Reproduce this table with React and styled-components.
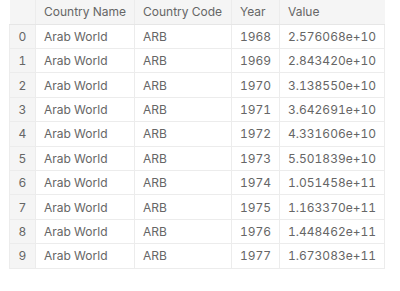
import React from "react";
import styled, { createGlobalStyle } from "styled-components";

const Global = createGlobalStyle`
  html, body { margin: 0; padding: 0; background: #ffffff; }
  body { font-family: Inter, "Noto Sans", "Liberation Sans", sans-serif; }
`;

const Wrap = styled.div`
  padding: 0 0 0 9px;
`;

const Table = styled.table`
  border-collapse: collapse;
  table-layout: fixed;
  width: 375px;
  font-size: 12px;
  color: #666666;
  font-variant-numeric: tabular-nums;
`;

const Th = styled.th`
  height: 23.7px;
  padding: 0 8px;
  text-align: left;
  font-weight: 400;
  background: #f5f5f5;
  border-left: 1px solid ${(p) => (p.$first ? "transparent" : "#ececec")};
  border-bottom: 1px solid #e6e6e6;
  white-space: nowrap;
`;

const Td = styled.td`
  height: 23.4px;
  padding: 0 8px;
  text-align: left;
  border: 1px solid #ececec;
  border-top: none;
  white-space: nowrap;
`;

const IndexCell = styled(Td)`
  background: #f5f5f5;
  text-align: center;
  padding: 0;
`;

const cols = [
  { key: "idx", w: 26 },
  { key: "name", w: 99 },
  { key: "code", w: 97 },
  { key: "year", w: 48 },
  { key: "value", w: 105 },
];

const rows = [
  [1968, "2.576068e+10"],
  [1969, "2.843420e+10"],
  [1970, "3.138550e+10"],
  [1971, "3.642691e+10"],
  [1972, "4.331606e+10"],
  [1973, "5.501839e+10"],
  [1974, "1.051458e+11"],
  [1975, "1.163370e+11"],
  [1976, "1.448462e+11"],
  [1977, "1.673083e+11"],
];

export default function App() {
  return (
    <Wrap>
      <Global />
      <Table>
        <colgroup>
          {cols.map((c) => (
            <col key={c.key} style={{ width: c.w }} />
          ))}
        </colgroup>
        <thead>
          <tr>
            <Th $first></Th>
            <Th>Country Name</Th>
            <Th>Country Code</Th>
            <Th>Year</Th>
            <Th>Value</Th>
          </tr>
        </thead>
        <tbody>
          {rows.map(([y, v], i) => (
            <tr key={i}>
              <IndexCell>{i}</IndexCell>
              <Td>Arab World</Td>
              <Td>ARB</Td>
              <Td>{y}</Td>
              <Td>{v}</Td>
            </tr>
          ))}
        </tbody>
      </Table>
    </Wrap>
  );
}
